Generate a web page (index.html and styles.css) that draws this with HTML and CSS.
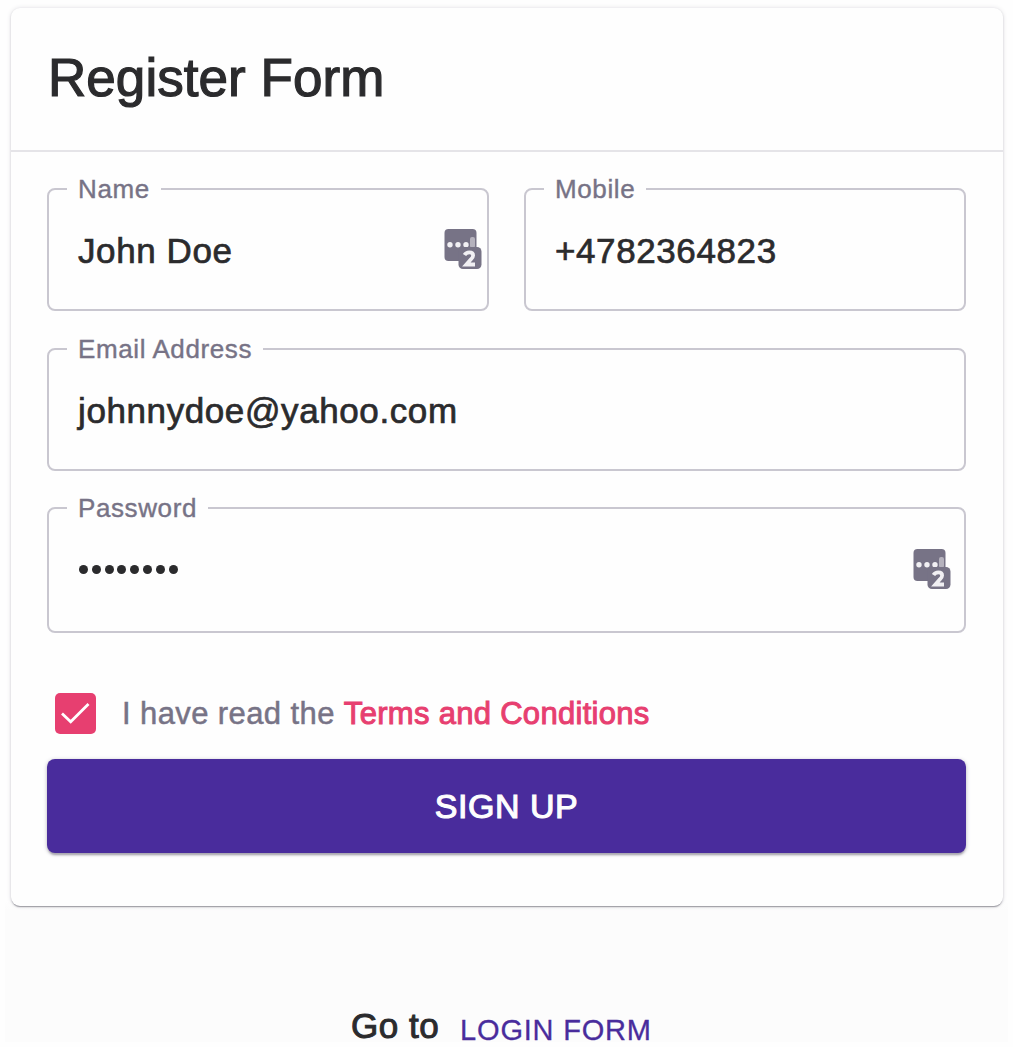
FILE: index.html
```html
<!DOCTYPE html>
<html lang="en">
<head>
<meta charset="utf-8">
<title>Register Form</title>
<link rel="stylesheet" href="styles.css">
</head>
<body>
<svg class="symbols" aria-hidden="true">
  <symbol id="manager" viewBox="0 0 38 42">
    <rect x="0.5" y="1" width="32" height="32" rx="4" fill="#777386"/>
    <circle cx="6" cy="16.8" r="2.7" fill="#f1f0f3"/>
    <circle cx="14" cy="16.8" r="2.7" fill="#f1f0f3"/>
    <circle cx="22" cy="16.8" r="2.7" fill="#f1f0f3"/>
    <rect x="26" y="9" width="5" height="11" rx="2" fill="#b5b2bd"/>
    <rect x="14.5" y="19" width="23" height="22" rx="4.5" fill="#777386"/>
    <path d="M20.5 27q1.6-2.6 4.8-2.6 3.8 0 3.8 3 0 1.9-2.2 3.9l-4.6 5.2h8.7" fill="none" stroke="#f1f0f3" stroke-width="3.8"/>
  </symbol>
</svg>
<main class="page">
  <form class="card">
    <header class="card-header"><h1 class="title">Register Form</h1></header>
    <div class="card-body">
      <div class="fields">
        <fieldset class="field"><legend class="label">Name</legend>
          <div class="control"><span class="value">John Doe</span><svg class="manager"><use href="#manager"/></svg></div>
        </fieldset>
        <fieldset class="field"><legend class="label">Mobile</legend>
          <div class="control"><span class="value">+4782364823</span></div>
        </fieldset>
        <fieldset class="field wide"><legend class="label">Email Address</legend>
          <div class="control"><span class="value">johnnydoe@yahoo.com</span></div>
        </fieldset>
        <fieldset class="field wide password"><legend class="label">Password</legend>
          <div class="control"><span class="dots"><i class="dot"></i><i class="dot"></i><i class="dot"></i><i class="dot"></i><i class="dot"></i><i class="dot"></i><i class="dot"></i><i class="dot"></i></span><svg class="manager"><use href="#manager"/></svg></div>
        </fieldset>
      </div>
      <div class="agreement">
        <svg class="checkbox" viewBox="0 0 41 41"><rect width="41" height="41" rx="5" fill="#e73f70"/><path d="M7 20.5l8.7 8.3L33.5 11" fill="none" stroke="#fff" stroke-width="2.8"/></svg>
        <span class="agreement-text">I have read the</span><a class="terms">Terms and Conditions</a>
      </div>
      <button class="submit" type="button">SIGN UP</button>
    </div>
  </form>
  <footer class="footer"><span class="goto">Go to</span><a class="login">LOGIN FORM</a></footer>
</main>
</body>
</html>
```
FILE: styles.css
```css
* { box-sizing: border-box; }
body {
  margin: 0;
  background: #fefefe;
  font-family: "Liberation Sans", Arial, sans-serif;
  color: #2b2b2d;
  overflow: hidden;
}
.symbols { display: none; }
.page {
  height: 1042px;
  margin: 0 5px 5px;
  padding: 8px 5px 0 6px;
  background: linear-gradient(#fefefe 900px, #fcfcfc 910px);
}
.card {
  width: 992px;
  height: 898px;
  background: #fefefe;
  border-radius: 9px;
  box-shadow: 0 2px 1px -1px #a09fa6, 0 1px 2px #c9c8cd, 0 0 5px #e4e3e7;
}
.card-header {
  height: 144px;
  padding: 40px 37px 0;
  border-bottom: 2px solid #e5e4e8;
}
.title {
  margin: 0;
  font-size: 53px;
  line-height: 60px;
  font-weight: 400;
  letter-spacing: 0.05px;
  -webkit-text-stroke: 1.2px;
}
.card-body { padding: 22px 37px 0 36px; }
.fields {
  display: grid;
  grid-template-columns: 1fr 1fr;
  gap: 23px 35px;
}
.field {
  min-width: 0;
  height: 137px;
  margin: 0;
  padding: 0 5px 0 29px;
  border: 2px solid #c9c7d0;
  border-radius: 8px;
}
.wide { grid-column: 1 / -1; }
.password { height: 140px; margin-top: -1px; padding-right: 13px; }
.label {
  height: 30px;
  margin-left: -11px;
  padding: 0 11px;
  font-size: 26px;
  line-height: 30px;
  letter-spacing: 0.6px;
  color: #777386;
  -webkit-text-stroke: 0.4px;
}
.control {
  display: flex;
  align-items: center;
  justify-content: space-between;
  height: 90px;
}
.password .control { height: 92px; }
.value {
  padding-top: 4px;
  font-size: 35px;
  letter-spacing: 0.6px;
  -webkit-text-stroke: 0.7px;
}
.manager { width: 38px; height: 42px; }
.dots { display: flex; gap: 3.8px; padding-left: 1px; }
.dot { width: 9px; height: 9px; border-radius: 50%; background: #2b2b2d; }
.agreement {
  display: flex;
  align-items: center;
  height: 41px;
  margin: 60px 0 25px 8px;
  font-size: 31px;
}
.checkbox { width: 41px; height: 41px; }
.agreement-text { margin: 0 9px 0 26px; letter-spacing: 0.4px; color: #777386; -webkit-text-stroke: 0.5px; }
.terms { letter-spacing: 0.3px; color: #e73f70; -webkit-text-stroke: 1px; }
.submit {
  display: block;
  width: 100%;
  height: 94px;
  padding: 0;
  border: 0;
  border-radius: 8px;
  background: #492c9c;
  color: #fefefe;
  font: 500 34px/94px "Liberation Sans", Arial, sans-serif;
  letter-spacing: 0.5px;
  -webkit-text-stroke: 1.1px;
  box-shadow: 0 3px 2px -1px #aaa8b0, 0 1px 4px #bdbbc3;
}
.footer {
  display: flex;
  align-items: baseline;
  margin: 100px 0 0 340px;
  line-height: 40px;
}
.goto { font-size: 35px; letter-spacing: 0.5px; -webkit-text-stroke: 1px; }
.login { position: relative; top: 2px; margin-left: 21px; font-size: 29px; letter-spacing: 0.8px; color: #492c9c; -webkit-text-stroke: 0.3px; }
```
